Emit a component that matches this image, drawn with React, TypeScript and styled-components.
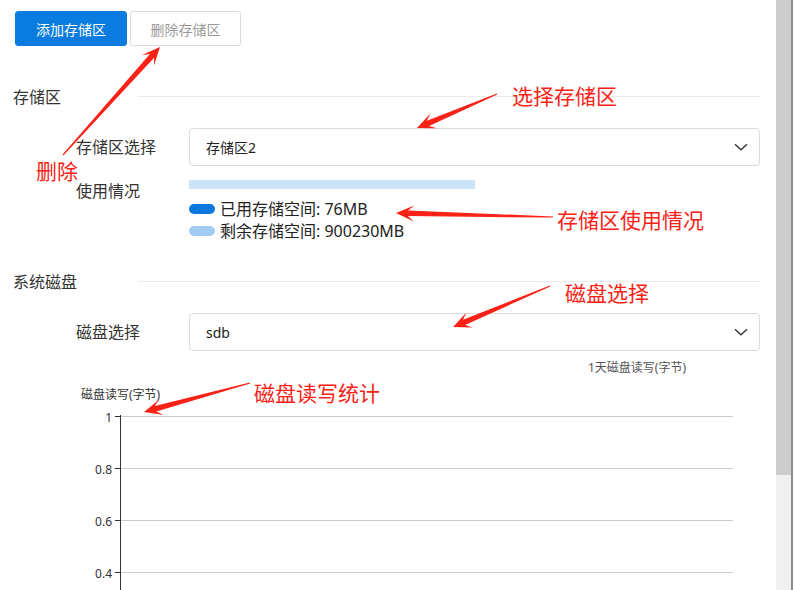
import React from 'react';
import styled, { createGlobalStyle } from 'styled-components';

const GlobalStyle = createGlobalStyle`
  html, body {
    margin: 0;
    padding: 0;
    background: #fff;
  }
  body {
    font-family: 'Noto Sans', 'Noto Sans CJK SC', sans-serif;
    color: #333;
  }
`;

const Page = styled.div`
  display: flex;
  width: 794px;
  height: 590px;
  overflow: hidden;
`;

const Main = styled.div`
  position: relative;
  width: 776px;
  height: 590px;
  box-sizing: border-box;
  padding: 11px 16px 0 13px;
  overflow: hidden;
`;

const Scrollbar = styled.div`
  width: 15px;
  background: #f0f0f0;
  border-right: 2px solid #8c8c8c;
  margin-right: 1px;
`;

const Thumb = styled.div`
  height: 475px;
  background: #cdcdcd;
`;

const Toolbar = styled.div`
  display: flex;
  gap: 3px;
  padding-left: 2px;
`;

const Button = styled.button<{ $primary?: boolean }>`
  height: 35px;
  padding: 0;
  width: ${(p) => (p.$primary ? '112px' : '111px')};
  border-radius: 3px;
  font-family: inherit;
  font-size: 14px;
  border: 1px solid ${(p) => (p.$primary ? '#0a7ce0' : '#dcdcdc')};
  background: ${(p) => (p.$primary ? '#0a7ce0' : '#fff')};
  color: ${(p) => (p.$primary ? '#fff' : '#9a9a9a')};
`;

const SectionHeader = styled.div<{ $top: number }>`
  display: flex;
  align-items: center;
  margin-top: ${(p) => p.$top}px;
`;

const SectionTitle = styled.div`
  width: 125px;
  font-size: 16px;
  line-height: 24px;
  color: #333;
`;

const Divider = styled.div`
  flex: 1;
  height: 1px;
  background: #ebebeb;
  margin-bottom: 2px;
`;

const FormRow = styled.div<{ $top: number; $align?: string }>`
  display: grid;
  grid-template-columns: 176px 1fr;
  align-items: ${(p) => p.$align || 'center'};
  margin-top: ${(p) => p.$top}px;
`;

const Label = styled.div`
  padding-left: 63px;
  font-size: 16px;
  line-height: 22px;
  color: #333;
`;

const Select = styled.div`
  height: 38px;
  box-sizing: border-box;
  border: 1px solid #dcdcdc;
  border-radius: 4px;
  display: flex;
  align-items: center;
  justify-content: space-between;
  padding: 0 11px 0 16px;
  font-size: 14px;
  color: #222;
`;

const Usage = styled.div`
  display: flex;
  flex-direction: column;
`;

const Bar = styled.div`
  width: 286px;
  height: 9px;
  background: #cce4f7;
`;

const Legend = styled.div`
  margin-top: 9px;
  display: flex;
  flex-direction: column;
`;

const LegendItem = styled.div`
  display: flex;
  align-items: center;
  gap: 5px;
  font-size: 16px;
  line-height: 22px;
  color: #222;
`;

const Swatch = styled.span<{ $color: string }>`
  width: 26px;
  height: 10px;
  border-radius: 5px;
  background: ${(p) => p.$color};
`;

const ChartBox = styled.div`
  margin: 1px -16px 0 -13px;
  height: 240px;
`;

const Overlay = styled.svg`
  position: absolute;
  left: 0;
  top: 0;
  pointer-events: none;
`;

const Note = styled.span<{ $x: number; $y: number }>`
  position: absolute;
  left: ${(p) => p.$x}px;
  top: ${(p) => p.$y - 14}px;
  font-family: 'Noto Sans CJK SC', sans-serif;
  font-size: 21px;
  line-height: 28px;
  color: #fa2216;
  white-space: nowrap;
`;

const Chevron = () => (
  <svg width="14" height="8" viewBox="0 0 14 8">
    <path d="M1 1.2 L7 6.8 L13 1.2" fill="none" stroke="#333" strokeWidth="1.3" />
  </svg>
);

const arrowPoints = (tx: number, ty: number, px: number, py: number) => {
  const dx = px - tx;
  const dy = py - ty;
  const len = Math.hypot(dx, dy);
  const ux = dx / len;
  const uy = dy / len;
  const nx = -uy;
  const ny = ux;
  const head = 18;
  const neck = 12;
  const headHalf = 8;
  const neckHalf = 2.8;
  const tailHalf = 0.6;
  const pt = (d: number, w: number) => `${(tx + ux * d + nx * w).toFixed(1)},${(ty + uy * d + ny * w).toFixed(1)}`;
  return [
    pt(0, tailHalf),
    pt(len - neck, neckHalf),
    pt(len - head, headHalf),
    pt(len, 0),
    pt(len - head, -headHalf),
    pt(len - neck, -neckHalf),
    pt(0, -tailHalf),
  ].join(' ');
};

const arrows = [
  [63, 155, 160, 47],
  [497, 94, 417, 128],
  [553, 217, 396, 213],
  [550, 286, 453, 327],
  [250, 383, 144, 412],
];

const notes = [
  { x: 36, y: 170, text: '删除' },
  { x: 512, y: 95, text: '选择存储区' },
  { x: 557, y: 219, text: '存储区使用情况' },
  { x: 565, y: 292, text: '磁盘选择' },
  { x: 254, y: 392, text: '磁盘读写统计' },
];

const ticks = [
  { y: 64, label: '1' },
  { y: 116, label: '0.8' },
  { y: 168, label: '0.6' },
  { y: 220, label: '0.4' },
];

const DiskChart = () => (
  <svg width="776" height="240" viewBox="0 0 776 240">
    <text x="637" y="15" textAnchor="middle" dominantBaseline="central" fontSize="12" fill="#555">
      1天磁盘读写(字节)
    </text>
    <text x="81" y="42" dominantBaseline="central" fontSize="12" fill="#333">
      磁盘读写(字节)
    </text>
    {ticks.map((t) => (
      <g key={t.label}>
        <line x1="121" x2="733" y1={t.y + 0.5} y2={t.y + 0.5} stroke="#cccccc" />
        <line x1="115" x2="120" y1={t.y + 0.5} y2={t.y + 0.5} stroke="#333" />
        <text x="112" y={t.y + 1} textAnchor="end" dominantBaseline="central" fontSize="12" fill="#333">
          {t.label}
        </text>
      </g>
    ))}
    <line x1="120.5" x2="120.5" y1="63" y2="240" stroke="#333" />
  </svg>
);

const App = () => {
  return (
    <>
      <GlobalStyle />
      <Page>
        <Main>
          <Toolbar>
            <Button $primary>添加存储区</Button>
            <Button>删除存储区</Button>
          </Toolbar>

          <SectionHeader $top={39}>
            <SectionTitle>存储区</SectionTitle>
            <Divider />
          </SectionHeader>

          <FormRow $top={19}>
            <Label>存储区选择</Label>
            <Select>
              <span>存储区2</span>
              <Chevron />
            </Select>
          </FormRow>

          <FormRow $top={14} $align="start">
            <Label>使用情况</Label>
            <Usage>
              <Bar />
              <Legend>
                <LegendItem>
                  <Swatch $color="#0a78dc" />
                  已用存储空间: 76MB
                </LegendItem>
                <LegendItem>
                  <Swatch $color="#a0cbf2" />
                  剩余存储空间: 900230MB
                </LegendItem>
              </Legend>
            </Usage>
          </FormRow>

          <SectionHeader $top={28}>
            <SectionTitle>系统磁盘</SectionTitle>
            <Divider />
          </SectionHeader>

          <FormRow $top={19}>
            <Label>磁盘选择</Label>
            <Select>
              <span>sdb</span>
              <Chevron />
            </Select>
          </FormRow>

          <ChartBox>
            <DiskChart />
          </ChartBox>

          <Overlay width="776" height="590" viewBox="0 0 776 590">
            {arrows.map((a, i) => (
              <polygon key={i} points={arrowPoints(a[0], a[1], a[2], a[3])} fill="#fa2216" />
            ))}
          </Overlay>
          {notes.map((n) => (
            <Note key={n.text} $x={n.x} $y={n.y}>
              {n.text}
            </Note>
          ))}
        </Main>
        <Scrollbar>
          <Thumb />
        </Scrollbar>
      </Page>
    </>
  );
};

export default App;
